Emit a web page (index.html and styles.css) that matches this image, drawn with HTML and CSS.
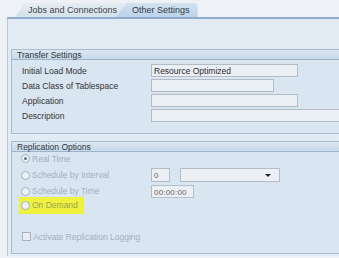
FILE: index.html
```html
<!DOCTYPE html>
<html lang="en">
<head>
<meta charset="UTF-8">
<title>Other Settings</title>
<link rel="stylesheet" href="styles.css">
</head>
<body>

<div class="tabs">
    <div class="tab">Jobs and Connections</div>
    <div class="tab active">Other Settings</div>
</div>

<div class="panel">
    <div class="group">
        <div class="group-head">Transfer Settings</div>
        <div class="group-body">
            <div class="row">
                <span class="label">Initial Load Mode</span>
                <span class="field w147">Resource Optimized</span>
            </div>
            <div class="row">
                <span class="label">Data Class of Tablespace</span>
                <span class="field w123"></span>
            </div>
            <div class="row">
                <span class="label">Application</span>
                <span class="field w147"></span>
            </div>
            <div class="row">
                <span class="label">Description</span>
                <span class="field wfull"></span>
            </div>
        </div>
    </div>

    <div class="group second">
        <div class="group-head">Replication Options</div>
        <div class="group-body options">
            <div class="opt first">
                <span class="radio checked"></span>
                <span class="label">Real Time</span>
            </div>
            <div class="opt">
                <span class="radio"></span>
                <span class="label short">Schedule by Interval</span>
                <span class="field num">0</span>
                <span class="field select"><span class="arrow"></span></span>
            </div>
            <div class="opt tight">
                <span class="radio"></span>
                <span class="label short">Schedule by Time</span>
                <span class="field time">00:00:00</span>
            </div>
            <div class="opt">
                <span class="highlight">
                    <span class="radio"></span>
                    <span class="label">On Demand</span>
                </span>
            </div>
            <div class="opt check-row">
                <span class="checkbox"></span>
                <span class="label">Activate Replication Logging</span>
            </div>
        </div>
    </div>
</div>

</body>
</html>
```

FILE: styles.css
```css
/* Base */
body {
    margin: 0;
    width: 339px;
    height: 258px;
    overflow: hidden;
    background-color: #eef2f6;
    font-family: 'Liberation Sans', Arial, sans-serif;
    font-size: 8.5px;
    color: #333;
}
/* Tabs */
.tabs {
    display: flex;
    align-items: flex-end;
    height: 17px;
    padding-left: 15px;
}
.tab {
    height: 14px;
    line-height: 15px;
    padding: 0 7px 0 13px;
    background: linear-gradient(#e6edf3, #d4e0ea);
    color: #3e444b;
    font-size: 9px;
    clip-path: polygon(10px 0, 100% 0, 100% 100%, 0 100%);
}
.tab.active {
    margin-left: -8px;
    padding: 0 8px 0 16px;
    background: linear-gradient(#d3e2f0, #bcd2e8);
    color: #2f3a46;
    clip-path: polygon(10px 0, calc(100% - 2px) 0, 100% 3px, 100% 100%, 0 100%);
}
/* Panel */
.panel {
    margin-left: 7px;
    height: 239px;
    border-left: 1px solid #b9c8d6;
    border-top: 2px solid #8fadca;
    background-color: #e2ebf4;
    padding: 30px 0 0 3px;
    box-sizing: border-box;
}
/* Groups */
.group {
    border: 1px solid #a9bccf;
    border-right: none;
    background-color: #d9e6f2;
}
.group.second {
    margin-top: 7px;
    height: 113px;
    box-sizing: border-box;
}
.group-head {
    height: 9px;
    line-height: 10px;
    padding-left: 5px;
    background: linear-gradient(#dbe6f0, #c9d9e8);
    border-bottom: 1px solid #9db3c8;
    color: #2c3640;
}
.group-body {
    padding: 3px 0 10px 10px;
}
.row {
    display: flex;
    align-items: center;
    height: 15px;
}
.label {
    width: 129px;
    flex-shrink: 0;
}
/* Inputs */
.field {
    display: block;
    height: 13px;
    line-height: 13px;
    box-sizing: border-box;
    padding-left: 2px;
    background-color: #eaf0f5;
    border: 1px solid #b4bcc4;
    color: #2a2a2a;
}
.w147 { width: 147px; }
.w123 { width: 123px; }
.wfull { flex: 1; border-right: none; }
/* Replication options */
.options {
    padding: 0 0 0 9px;
    color: #a2b0be;
}
.options .label {
    color: #a2b0be;
}
.opt {
    display: flex;
    align-items: center;
    height: 14px;
    margin-bottom: 2px;
}
.opt.first {
    height: 13px;
    margin-bottom: 3px;
}
.opt.tight {
    margin-bottom: 0;
}
.opt .short {
    width: 119px;
}
.radio {
    width: 7px;
    height: 7px;
    margin-right: 2px;
    border: 1px solid #a3afbb;
    border-radius: 50%;
    background-color: #edf2f6;
    display: flex;
    align-items: center;
    justify-content: center;
    flex-shrink: 0;
}
.radio.checked::after {
    content: "";
    width: 3px;
    height: 3px;
    border-radius: 50%;
    background-color: #6b7480;
}
.field.num {
    width: 19px;
    height: 14px;
    line-height: 14px;
    color: #666;
    font-size: 8px;
}
.field.select {
    position: relative;
    width: 100px;
    height: 14px;
    margin-left: 10px;
}
.arrow {
    position: absolute;
    right: 8px;
    top: 5px;
    border-left: 3px solid transparent;
    border-right: 3px solid transparent;
    border-top: 3px solid #222;
}
.field.time {
    width: 43px;
    color: #666;
    font-size: 8px;
    letter-spacing: 0.2px;
}
.highlight {
    display: flex;
    align-items: center;
    height: 17px;
    margin-left: -2px;
    padding: 0 6px 0 2px;
    background-color: #eef23c;
}
.highlight .label {
    width: auto;
    color: #9aa35a;
}
.check-row {
    margin-top: 18px;
    height: 13px;
}
.checkbox {
    width: 7px;
    height: 7px;
    margin: 0 2px 0 1px;
    border: 1px solid #a7b2bd;
    background-color: #e6edf3;
}
```
